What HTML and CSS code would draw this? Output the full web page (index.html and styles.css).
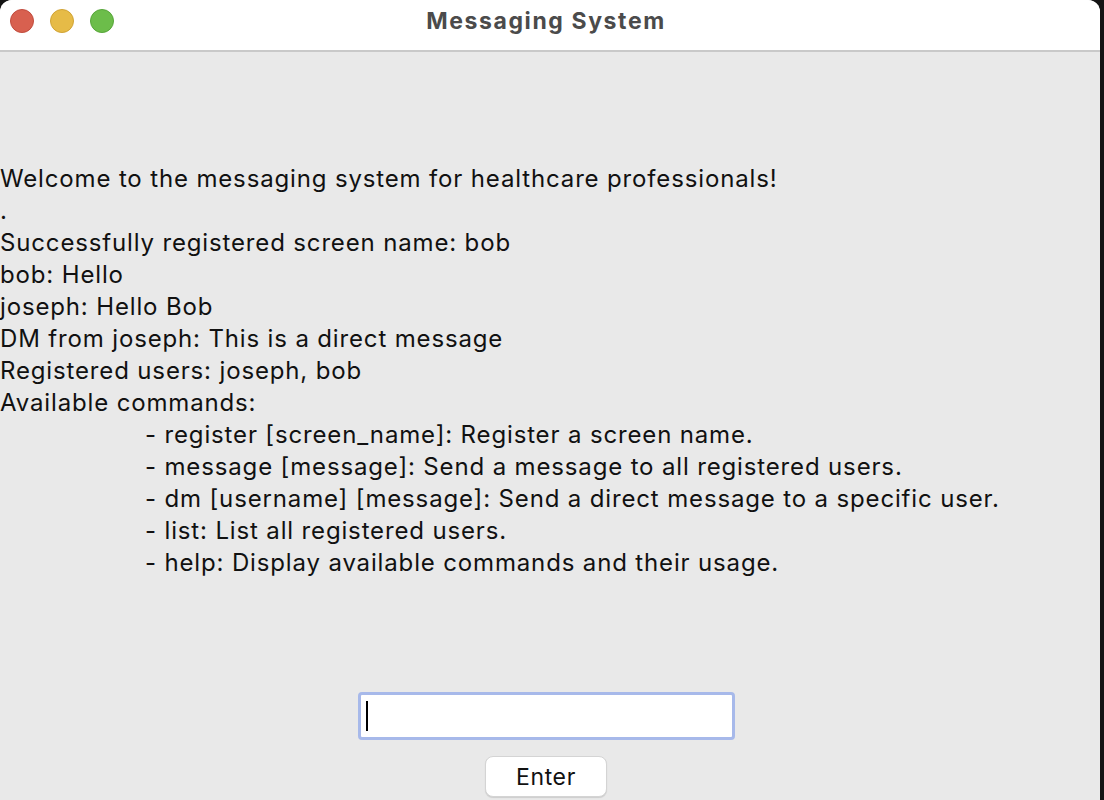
FILE: index.html
```html
<!DOCTYPE html>
<html>
<head>
<meta charset="utf-8">
<link rel="stylesheet" href="styles.css">
</head>
<body>
<div class="window">
  <div class="titlebar">
    <div class="lights">
      <span class="light red"></span>
      <span class="light yellow"></span>
      <span class="light green"></span>
    </div>
    <div class="title">Messaging System</div>
  </div>
  <div class="content">
    <div class="log">
      <div class="line">Welcome to the messaging system for healthcare professionals!</div>
      <div class="line">.</div>
      <div class="line">Successfully registered screen name: bob</div>
      <div class="line">bob: Hello</div>
      <div class="line">joseph: Hello Bob</div>
      <div class="line">DM from joseph: This is a direct message</div>
      <div class="line">Registered users: joseph, bob</div>
      <div class="line">Available commands:</div>
      <div class="line cmd">- register [screen_name]: Register a screen name.</div>
      <div class="line cmd">- message [message]: Send a message to all registered users.</div>
      <div class="line cmd">- dm [username] [message]: Send a direct message to a specific user.</div>
      <div class="line cmd">- list: List all registered users.</div>
      <div class="line cmd">- help: Display available commands and their usage.</div>
    </div>
    <div class="controls">
      <div class="entry"><span class="caret"></span></div>
      <button class="btn">Enter</button>
    </div>
  </div>
</div>
</body>
</html>
```
FILE: styles.css
```css
html, body {
  margin: 0;
  padding: 0;
  background: #141414;
  width: 1104px;
  height: 800px;
  overflow: hidden;
}
.window {
  width: 1100px;
  height: 812px;
  background: #e9e9e9;
  border-radius: 12px;
  overflow: hidden;
  font-family: Inter, "Liberation Sans", sans-serif;
  color: #111;
}
.titlebar {
  height: 50px;
  background: #ffffff;
  border-bottom: 2px solid #c9c9c9;
  display: flex;
  align-items: center;
  position: relative;
}
.lights {
  display: flex;
  gap: 16px;
  padding-left: 10px;
  margin-top: -8px;
}
.light {
  width: 24px;
  height: 24px;
  border-radius: 50%;
  box-sizing: border-box;
}
.red { background: #d8604f; border: 1px solid #c04b3d; }
.yellow { background: #e6bb47; border: 1px solid #d0a335; }
.green { background: #6cbd4a; border: 1px solid #57a53a; }
.title {
  position: absolute;
  left: 0;
  right: 8px;
  top: 7px;
  text-align: center;
  font-size: 23px;
  font-weight: 700;
  color: #4b4b4b;
  letter-spacing: 1.6px;
}
.content {
  display: flex;
  flex-direction: column;
  padding-top: 111px;
}
.log {
  font-size: 24px;
  line-height: 32px;
  letter-spacing: 0.85px;
}
.line { white-space: pre; }
.cmd { padding-left: 145px; }
.controls {
  display: flex;
  flex-direction: column;
  align-items: center;
  margin-top: 113px;
  padding-right: 8px;
}
.entry {
  width: 377px;
  height: 48px;
  box-sizing: border-box;
  background: #fff;
  border: 3px solid #a7b9ea;
  border-radius: 4px;
  display: flex;
  align-items: center;
  padding-left: 5px;
}
.caret {
  width: 2px;
  height: 30px;
  background: #000;
}
.btn {
  margin-top: 16px;
  width: 122px;
  height: 41px;
  background: #fff;
  border: 1px solid #d4d4d4;
  border-radius: 8px;
  font-family: Inter, "Liberation Sans", sans-serif;
  font-size: 23px;
  letter-spacing: 0.6px;
  color: #111;
  padding: 0;
  box-shadow: 0 1px 1px rgba(0,0,0,0.12);
}
```
